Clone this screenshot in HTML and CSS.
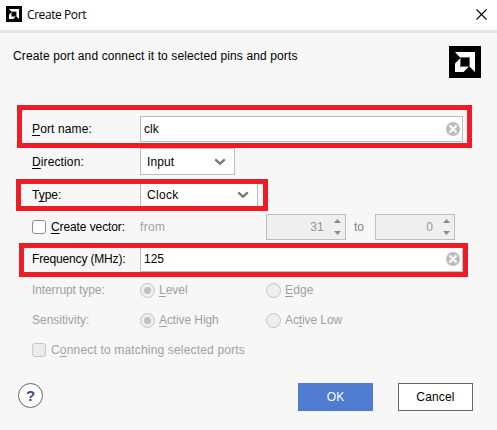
FILE: index.html
```html
<!DOCTYPE html>
<html lang="en">
<head>
<meta charset="utf-8">
<title>Create Port</title>
<link rel="stylesheet" href="styles.css">
</head>
<body>
<svg class="defs" width="0" height="0" aria-hidden="true">
  <symbol id="logo" viewBox="0 0 32 32"><path fill="#000" d="M0 0h32v32H0z"/><path fill="#fff" d="M6 6h20v20l-5.500-5.500V11.500h-9.500zM11 12.500V21h8.500l-5 5H6v-8.500z"/><path fill="none" stroke="#666" d="M11.500 11.500h9v9h-9z"/></symbol>
  <symbol id="clear" viewBox="0 0 14 14"><circle cx="7" cy="7" r="7" fill="#bdbdbd"/><path d="M3.500 3.500l7 7M10.500 3.500l-7 7" stroke="#fff" stroke-width="1.900"/></symbol>
  <symbol id="chevron" viewBox="0 0 10 7"><path d="M.8 1.200L5 5l4.200-3.800" fill="none" stroke="#777" stroke-width="2"/></symbol>
  <symbol id="arrows" viewBox="0 0 7 16"><path d="M0 4l3.500-4L7 4zM0 12h7l-3.500 4z" fill="#8b8b8b"/></symbol>
</svg>
<div class="dialog">
  <header class="titlebar">
    <svg class="app-icon"><use href="#logo"/></svg>
    <span class="title">Create Port</span>
    <svg class="close" viewBox="0 0 11 11"><path d="M.5.5l10 10M10.500.5l-10 10" stroke="#000" stroke-width="1.100"/></svg>
  </header>
  <div class="intro">
    <p class="intro-text">Create port and connect it to selected pins and ports</p>
    <svg class="brand"><use href="#logo"/></svg>
  </div>
  <form class="form">
    <div class="row"><label class="label"><span class="loose"><u>P</u>ort name:</span></label><div class="field"><span>clk</span><svg class="clear"><use href="#clear"/></svg></div></div>
    <div class="row row-tall"><label class="label"><span class="loose"><u>D</u>irection:</span></label><div class="select direction"><span class="loose">Input</span><svg class="chevron"><use href="#chevron"/></svg></div></div>
    <div class="row row-tall"><label class="label"><span>T<u>y</u>pe:</span></label><div class="select type"><span class="wide">Clock</span><svg class="chevron"><use href="#chevron"/></svg></div></div>
    <div class="row"><label class="label"><i class="check"></i><span class="tight"><u>C</u>reate vector:</span></label><span class="from muted">from</span><div class="spinner">31<svg class="arrows"><use href="#arrows"/></svg></div><span class="to">to</span><div class="spinner">0<svg class="arrows"><use href="#arrows"/></svg></div></div>
    <div class="row"><label class="label"><span class="tighter">Frequency (MHz):</span></label><div class="field"><span>125</span><svg class="clear"><use href="#clear"/></svg></div></div>
    <div class="row row-short muted"><span class="label"><span class="tight">Interrupt type:</span></span><label class="option"><i class="radio on"></i><span><u>L</u>evel</span></label><label class="option"><i class="radio"></i><span class="loose"><u>E</u>dge</span></label></div>
    <div class="row row-short muted"><span class="label"><span>Sensitivity:</span></span><label class="option"><i class="radio on"></i><span class="tight"><u>A</u>ctive High</span></label><label class="option"><i class="radio"></i><span class="tight">Ac<u>t</u>ive Low</span></label></div>
    <div class="row row-short muted"><label class="connect"><i class="check off"></i><span class="connect-text">C<u>o</u>nnect to matching selected ports</span></label></div>
  </form>
  <footer class="footer">
    <span class="help">?</span>
    <span class="btn ok">OK</span>
    <span class="btn cancel">Cancel</span>
  </footer>
  <div class="mark mark-name"></div>
  <div class="mark mark-type"></div>
  <div class="mark mark-frequency"></div>
</div>
</body>
</html>
```
FILE: styles.css
```css
* { box-sizing: border-box; }
body { margin: 0; font: 12px/16px "Liberation Sans", Arial, sans-serif; color: #000; background: #f7f7f7; }
svg { display: block; flex: none; }
.defs { position: absolute; }
u { text-decoration: underline; text-underline-offset: 2px; text-decoration-thickness: 1px; text-decoration-skip-ink: none; }
.loose { letter-spacing: .12px; }
.wide { letter-spacing: .3px; }
.tight { letter-spacing: -.1px; }
.tighter { letter-spacing: -.16px; }
.connect-text { letter-spacing: .17px; }
.dialog { position: relative; width: 497px; height: 430px; overflow: hidden; background: #f7f7f7; }
.titlebar { display: flex; align-items: center; height: 33px; padding: 0 10px 4px 6px; background: #fff; border-bottom: 3px solid #e5e5e5; }
.app-icon { width: 16px; height: 16px; margin-top: 2px; }
.title { flex: 1; margin: 3px 0 0 5px; font: 12px/16px "Open Sans", "Noto Sans", sans-serif; letter-spacing: -.42px; }
.close { width: 11px; height: 11px; margin-top: 2px; }
.intro { display: flex; justify-content: space-between; height: 80px; padding: 13px 16px 0 13px; }
.intro-text { margin: 2px 0 0; letter-spacing: .12px; white-space: nowrap; }
.brand { width: 32px; height: 32px; }
.form { height: 270px; padding-left: 32px; }
.row { display: flex; align-items: center; height: 32px; white-space: nowrap; }
.row-tall { height: 33px; }
.row-short { height: 30px; }
.label { display: flex; align-items: center; width: 108px; }
.muted { color: #a0a0a0; }
.field, .select { display: flex; align-items: center; justify-content: space-between; height: 26px; border: 1px solid #bdbdbd; background: #fff; }
.field { width: 323px; padding: 0 2px 0 3px; }
.clear { width: 14px; height: 14px; }
.select { height: 27px; padding: 0 8px 0 6px; }
.direction { width: 95px; }
.type { width: 118px; }
.chevron { width: 12px; height: 8px; margin-top: 1px; }
.check { width: 14px; height: 14px; margin-right: 5px; border: 1px solid #8f8f8f; border-radius: 3px; background: #fff; }
.off { border-color: #c6c6c6; background: #ececec; }
.from { width: 126px; letter-spacing: .3px; }
.spinner { display: flex; align-items: center; justify-content: flex-end; width: 80px; height: 26px; padding-right: 4px; border: 1px solid #bdbdbd; background: #efefef; color: #969696; letter-spacing: .2px; }
.arrows { width: 7px; height: 16px; margin-left: 10px; }
.to { width: 29px; padding-left: 8px; color: #858585; }
.option { display: flex; align-items: center; width: 126px; }
.radio { display: flex; align-items: center; justify-content: center; width: 15px; height: 15px; margin-right: 4px; border: 1px solid #c4c4c4; border-radius: 50%; background: #eee; }
.on::after { content: ""; width: 7px; height: 7px; border-radius: 50%; background: #c0c0c0; }
.connect { display: flex; align-items: center; }
.footer { display: flex; height: 47px; padding-left: 18px; }
.help { width: 25px; height: 25px; margin-right: 255px; border: 1px solid #666; border-radius: 50%; background: #fff; color: #304f91; font-weight: bold; font-size: 15px; line-height: 24px; text-align: center; }
.btn { width: 75px; height: 28px; line-height: 28px; text-align: center; }
.ok { margin-right: 25px; background: #4f7bd0; color: #fff; }
.cancel { border: 1px solid #666; background: #fff; line-height: 26px; letter-spacing: .18px; }
.mark { position: absolute; border: 5px solid #ee1c25; }
.mark-name { left: 17px; top: 105px; width: 455px; height: 43px; }
.mark-type { left: 16px; top: 179px; width: 252px; height: 32px; }
.mark-frequency { left: 19px; top: 243px; width: 449px; height: 34px; }
```
